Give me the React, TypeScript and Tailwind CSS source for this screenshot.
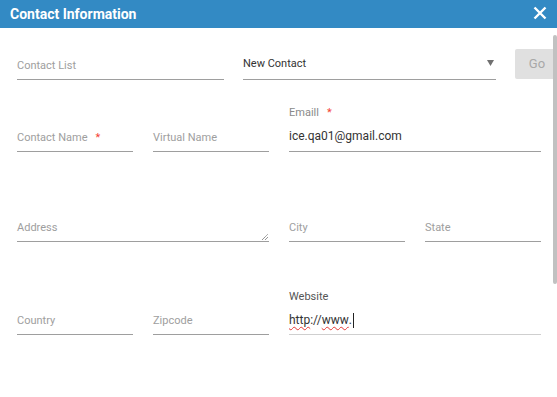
const font = { fontFamily: 'Roboto, "Liberation Sans", sans-serif' };

function Field({ label, required, className = '' }: { label: string; required?: boolean; className?: string }) {
  return (
    <div className={`h-[32px] border-b border-[#9e9e9e] flex items-end pb-[7px] text-[11px] leading-[13px] text-[#9e9e9e] ${className}`}>
      <span>{label}</span>
      {required && <span className="ml-[8px] text-[#f44336]">*</span>}
    </div>
  );
}

export default function App() {
  return (
    <div className="w-[557px] h-[397px] bg-white overflow-hidden relative" style={font}>
      <div className="h-[28px] bg-[#338ac4] flex items-center justify-between pl-[10px] pr-[10px]">
        <span className="text-white text-[14px] font-bold">Contact Information</span>
        <svg width="14" height="14" viewBox="0 0 14 14" className="mb-[3px]">
          <path d="M1.5 1.5 L12.5 12.5 M12.5 1.5 L1.5 12.5" stroke="white" strokeWidth="2.4" />
        </svg>
      </div>

      <div className="pl-[17px]">
        {/* row 1 */}
        <div className="mt-[20px] flex items-start">
          <Field label="Contact List" className="w-[207px]" />
          <div className="ml-[19px] w-[253px] h-[32px] border-b border-[#9e9e9e] flex items-end justify-between pb-[9px]">
            <span className="text-[11px] leading-[13px] text-[#333]">New Contact</span>
            <svg width="7" height="6" viewBox="0 0 7 6" className="mr-[2px] mb-[4px]">
              <path d="M0 0 L7 0 L3.5 6 Z" fill="#707070" />
            </svg>
          </div>
          <button className="ml-[19px] mt-[1px] w-[40px] h-[30px] rounded-[2px] bg-[#e0e0e0] text-[13px] text-[#a8a8a8] flex items-center justify-center pl-[4px]">
            Go
          </button>
        </div>

        {/* row 2 */}
        <div className="mt-[26px] h-[46px] grid grid-cols-[116px_116px_252px] gap-x-[20px] items-end">
          <Field label="Contact Name" required />
          <Field label="Virtual Name" />
          <div className="h-[46px] border-b border-[#9e9e9e] flex flex-col pb-[8px]">
            <div className="text-[11px] leading-[13px] text-[#8a8a8a]">
              Emaill<span className="ml-[8px] text-[#f44336]">*</span>
            </div>
            <div className="mt-[9px] text-[12px] leading-[16px] text-[#333]">ice.qa01@gmail.com</div>
          </div>
        </div>

        {/* row 3 */}
        <div className="mt-[58px] grid grid-cols-[252px_116px_116px] gap-x-[20px]">
          <div className="relative">
            <Field label="Address" />
            <svg width="7" height="7" viewBox="0 0 7 7" className="absolute right-[1px] bottom-[2px]">
              <path d="M1 7 L7 1 M4 7 L7 4" stroke="#444" strokeWidth="0.8" strokeDasharray="1 0.6" />
            </svg>
          </div>
          <Field label="City" />
          <Field label="State" />
        </div>

        {/* row 4 */}
        <div className="mt-[48px] h-[45px] grid grid-cols-[116px_116px_252px] gap-x-[20px] items-end">
          <Field label="Country" />
          <Field label="Zipcode" />
          <div className="h-[45px] border-b border-[#cfcfcf] flex flex-col pb-[6px]">
            <div className="text-[11px] leading-[13px] text-[#555]">Website</div>
            <div className="mt-[9px] text-[12px] leading-[16px] text-[#333] flex items-center">
              <span className="underline decoration-wavy decoration-[#e53935] decoration-1 underline-offset-2">http</span>
              <span>://</span>
              <span className="underline decoration-wavy decoration-[#e53935] decoration-1 underline-offset-2">www</span>
              <span>.</span>
              <span className="ml-[1px] w-px h-[15px] bg-[#222]" />
            </div>
          </div>
        </div>
      </div>

      <div className="absolute left-[553px] top-[35px] w-[4px] h-[249px] rounded-full bg-[#c1c1c1]" />
    </div>
  );
}
